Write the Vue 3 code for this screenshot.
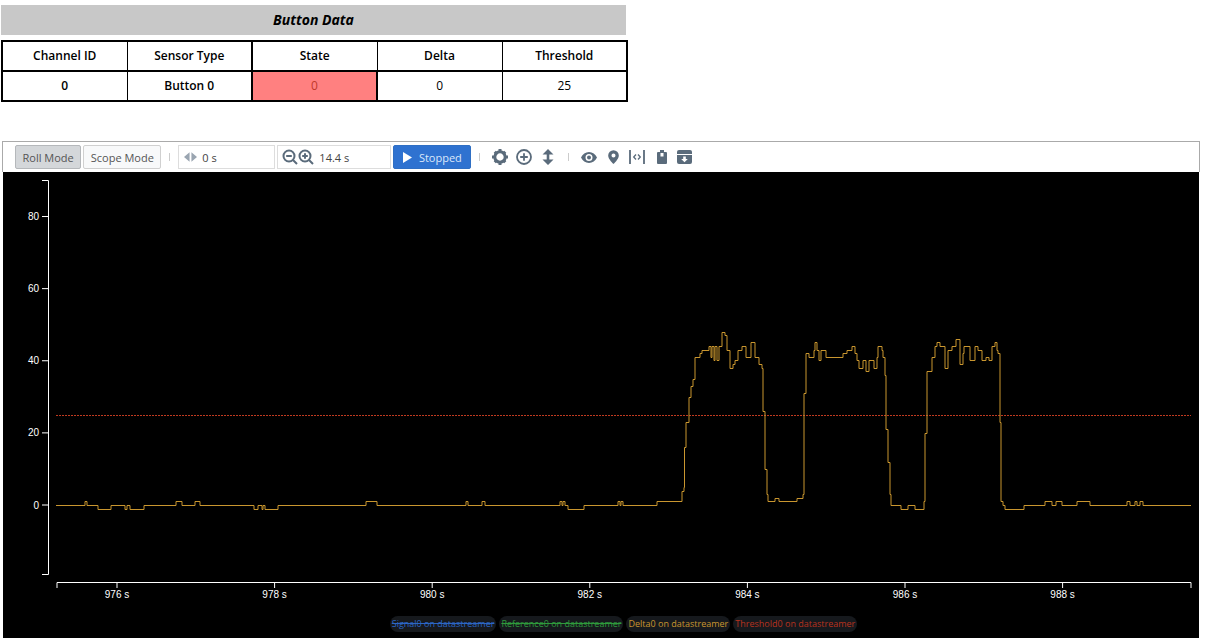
<template>
  <div class="page">
    <div class="title">Button Data</div>
    <table class="data-table">
      <tbody>
        <tr>
          <th v-for="h in headers" :key="h">{{ h }}</th>
        </tr>
        <tr>
          <td class="fw">0</td>
          <td class="fw">Button 0</td>
          <td class="state">0</td>
          <td>0</td>
          <td>25</td>
        </tr>
      </tbody>
    </table>

    <div class="toolbar">
      <button class="btn active">Roll Mode</button>
      <button class="btn">Scope Mode</button>
      <span class="sep"></span>
      <div class="field f-offset">
        <svg viewBox="0 0 14 10" width="13" height="10">
          <path d="M6 0v10L0 5zM8 0v10l6-5z" fill="#9aa5b1" />
        </svg>
        <span>0 s</span>
      </div>
      <div class="field f-span">
        <svg viewBox="0 0 16 16" width="16" height="16">
          <circle cx="7" cy="7" r="5.500" fill="none" stroke="#5a6b7b" stroke-width="2" />
          <path d="M4.200 7h5.600M11 11l4 4" stroke="#5a6b7b" stroke-width="2" fill="none" />
        </svg>
        <svg viewBox="0 0 16 16" width="16" height="16">
          <circle cx="7" cy="7" r="5.500" fill="none" stroke="#5a6b7b" stroke-width="2" />
          <path d="M4.200 7h5.600M7 4.200v5.600M11 11l4 4" stroke="#5a6b7b" stroke-width="2" fill="none" />
        </svg>
        <span>14.4 s</span>
      </div>
      <button class="btn-stop">
        <svg viewBox="0 0 10 12" width="9" height="11"><path d="M0 0l10 6-10 6z" fill="#fff" /></svg>
        Stopped
      </button>
      <span class="sep s2"></span>
      <div class="icons">
        <svg class="i-gear" viewBox="0 0 16 16" width="16" height="16">
          <path d="M8 8m-5.200 0a5.200 5.200 0 1 0 10.400 0a5.200 5.200 0 1 0-10.400 0" fill="none" stroke="#5a6b7b" stroke-width="3" />
          <path d="M6.500 0h3v3h-3zM6.500 13h3v3h-3zM0 6.500h3v3H0zM13 6.500h3v3h-3zM1.700 3.800l2.100-2.100 2.100 2.100-2.100 2.100zM10.100 12.200l2.100-2.100 2.100 2.100-2.100 2.100zM1.700 12.200l2.100-2.100 2.100 2.100-2.100 2.100zM10.100 3.800l2.100-2.100 2.100 2.100-2.100 2.100z" fill="#5a6b7b" />
        </svg>
        <svg class="i-plus" viewBox="0 0 16 16" width="16" height="16">
          <circle cx="8" cy="8" r="7" fill="none" stroke="#5a6b7b" stroke-width="1.800" />
          <path d="M4.200 8h7.600M8 4.200v7.600" stroke="#5a6b7b" stroke-width="1.800" />
        </svg>
        <svg class="i-arrows" viewBox="0 0 12 16" width="12" height="16">
          <path d="M6 0l5.500 5.500H7.300v5h4.200L6 16 .5 10.500h4.200v-5H.5z" fill="#5a6b7b" />
        </svg>
        <span class="sep s3"></span>
        <svg class="i-eye" viewBox="0 0 16 11" width="16" height="11">
          <path d="M8 0C4.500 0 1.600 2.300 0 5.500 1.600 8.700 4.500 11 8 11s6.400-2.300 8-5.500C14.400 2.300 11.500 0 8 0zm0 9a3.500 3.500 0 1 1 0-7 3.500 3.500 0 0 1 0 7z" fill="#5a6b7b" />
          <circle cx="8" cy="5.500" r="2" fill="#5a6b7b" />
        </svg>
        <svg class="i-pin" viewBox="0 0 12 15" width="11" height="14">
          <path d="M6 0a5.800 5.800 0 0 0-5.800 5.800C.2 10 6 15 6 15s5.800-5 5.800-9.200A5.800 5.800 0 0 0 6 0zm0 8a2.200 2.200 0 1 1 0-4.400A2.200 2.200 0 0 1 6 8z" fill="#5a6b7b" />
        </svg>
        <svg class="i-span" viewBox="0 0 16 14" width="16" height="14">
          <path d="M1 0v14M15 0v14" stroke="#5a6b7b" stroke-width="1.800" />
          <path d="M7 4.500L4.700 7 7 9.500M9 4.500L11.300 7 9 9.500" stroke="#5a6b7b" stroke-width="1.300" fill="none" />
        </svg>
        <svg class="i-lock" viewBox="0 0 10 14" width="10" height="14">
          <path d="M3 0h4v2h2a1 1 0 0 1 1 1v10a1 1 0 0 1-1 1H1a1 1 0 0 1-1-1V3a1 1 0 0 1 1-1h2z" fill="#5a6b7b" />
          <rect x="3.500" y="3" width="3" height="3.500" fill="#fff" />
        </svg>
        <svg class="i-box" viewBox="0 0 15 14" width="15" height="14">
          <path d="M2 0h11a2 2 0 0 1 2 2v2H0V2a2 2 0 0 1 2-2z" fill="#5a6b7b" />
          <path d="M0 5h15v7a2 2 0 0 1-2 2H2a2 2 0 0 1-2-2z" fill="#5a6b7b" />
          <path d="M6.200 6.500h2.600v2.500h2L7.500 12.200 4.200 9h2z" fill="#fff" />
        </svg>
      </div>
    </div>

    <div class="chart">
      <svg class="plot" width="1196" height="440" viewBox="3 172 1196 440">
        <g stroke="#fff" fill="none">
          <path d="M42 180.500h6.500v394H42" />
          <path d="M57 588v-5.500h1134v5.500" />
          <path v-for="t in yTicks" :key="t.label" :d="`M42 ${t.y}h6`" />
          <path v-for="t in xTicks" :key="t.label" :d="`M${t.x} 583v5`" />
        </g>
        <g class="tick-text">
          <text v-for="t in yTicks" :key="t.label" x="39" :y="t.y + 3.500" text-anchor="end">{{ t.label }}</text>
          <text v-for="t in xTicks" :key="t.label" :x="t.x" y="598" text-anchor="middle">{{ t.label }}</text>
        </g>
        <path d="M56 415.500H589M590 415.500H1191" stroke="#c03a20" stroke-dasharray="2 1" fill="none" />
        <path :d="deltaPath" stroke="#c9962f" fill="none" />
      </svg>
      <div class="legend">
        <span class="pill off blue">Signal0 on datastreamer</span>
        <span class="pill off green">Reference0 on datastreamer</span>
        <span class="pill orange">Delta0 on datastreamer</span>
        <span class="pill red">Threshold0 on datastreamer</span>
      </div>
    </div>
  </div>
</template>

<script setup>
import { computed } from 'vue'

const headers = ['Channel ID', 'Sensor Type', 'State', 'Delta', 'Threshold']

const yTicks = [80, 60, 40, 20, 0].map(v => ({ label: String(v), y: 505 - v * 3.606 }))
const xTicks = [976, 978, 980, 982, 984, 986, 988].map((s, i) => ({ label: s + ' s', x: 117 + i * 157.6 }))

// x pixel where the value starts, value
const samples = [
  [56, 0], [85, 1], [87, 0], [98, -1], [111, 0], [125, -1], [127, 0], [130, -1], [144, 0],
  [176, 1], [182, 0], [195, 1], [200, 0], [254, -1], [258, 0], [262, -1], [263, 0], [265, -1], [278, 0],
  [366, 1], [377, 0], [466, 1], [468, 0], [482, 1], [485, 0], [560, 1], [562, 0], [563, 1], [565, 0],
  [568, -1], [584, 0], [618, 1], [620, 0], [621, 1], [623, 0], [657, 1],
  [682, 4], [684, 5], [684.5, 16], [686, 23], [689, 30], [691, 33], [693, 35], [695, 41],
  [700, 42], [702, 43], [709, 44], [711, 41], [712, 44], [714, 40], [715, 44], [717, 40], [719, 44],
  [722, 48], [725, 47], [727, 43], [730, 38], [733, 39], [735, 40], [738, 43], [742, 44], [746, 41],
  [751, 45], [755, 41], [759, 39], [762, 38], [763, 26], [765, 10], [767, 3], [768, 1],
  [775, 2], [779, 1], [797, 2], [803, 3], [804, 31], [806, 42], [809, 41], [814, 43], [815, 45], [817, 43],
  [819, 40], [821, 43], [826, 41],
  [843, 42], [847, 43], [852, 44], [855, 42], [857, 40], [859, 38], [863, 40], [866, 37], [869, 40],
  [874, 38], [877, 41], [878, 44], [882, 43], [883, 41], [885, 36], [886, 21], [888, 12], [890, 3], [891, 0],
  [901, -1], [908, 0], [915, -1], [924, 1], [925, 20], [927, 37], [932, 41], [935, 44], [937, 45], [940, 44],
  [945, 38], [948, 43], [952, 44], [956, 46], [960, 39], [963, 42], [964, 44], [970, 40], [975, 44], [978, 43],
  [982, 40], [986, 41], [989, 40], [992, 44], [995, 45], [997, 43], [998, 42], [1000, 23], [1001, 1], [1003, 0], [1005, -1],
  [1024, 0], [1045, 1], [1052, 0], [1056, 1], [1062, 0], [1077, 1], [1090, 0],
  [1127, 1], [1130, 0], [1135, 1], [1137, 0], [1140, 1], [1143, 0], [1191, 0],
]

const deltaPath = computed(() => {
  let d = ''
  samples.forEach(([x, v], i) => {
    const y = (505.5 - Math.round(v * 3.6125)).toFixed(1)
    d += i === 0 ? `M${x} ${y}` : `H${x}V${y}`
  })
  return d
})
</script>

<style scoped>
.page { width: 1205px; height: 644px; overflow: hidden; background: #fff; font-family: "Open Sans", "Noto Sans", sans-serif; padding-top: 5px; box-sizing: border-box; }
.title { margin-left: 1px; width: 625px; height: 30px; background: #c8c8c8; text-align: center; line-height: 30px; font-size: 14px; font-weight: 700; font-style: italic; color: #000; }
.data-table { margin: 5px 0 0 1px; width: 627px; height: 62px; border-collapse: collapse; border: 2px solid #000; table-layout: fixed; font-size: 12px; color: #000; }
.data-table th, .data-table td { border: 1px solid #000; text-align: center; padding: 0; height: 28px; line-height: 16px; font-weight: 400; }
.data-table tr:first-child th { border-bottom: 2px solid #000; font-weight: 600; }
.data-table th:nth-child(3), .data-table td.state { border-left: 2px solid #000; }
.data-table .fw { font-weight: 600; }
.data-table .state { background: #ff8080; color: #c0392b; border-right: 2px solid #000; }

.toolbar { margin: 39px 0 0 2px; width: 1198px; height: 31px; border: 1px solid #aaa; border-bottom: none; box-sizing: border-box; display: flex; align-items: center; padding: 0 0 0 12px; font-size: 11px; color: #444; }
.btn { height: 24px; padding: 0 6.500px; margin-right: 2px; border: 1px solid #d0d0d0; border-radius: 2px; background: #f8f9fa; font: inherit; color: #555; }
.btn.active { background: #d4d7da; border-color: #b5b8bb; }
.sep { width: 1px; height: 8px; background: #ccc; margin: 0 8px 0 6px; }
.field { height: 24px; border: 1px solid #ddd; box-sizing: border-box; display: flex; align-items: center; background: #fff; margin-right: 2px; }
.f-offset { width: 97px; padding-left: 5px; gap: 5px; }
.f-span { width: 114px; padding-left: 4px; gap: 0; }
.f-span span { margin-left: 5px; }
.btn-stop { width: 78px; height: 24px; border: 1px solid #2f6fc4; border-radius: 2px; background: #2f72d0; color: #dbe8fa; font: inherit; display: flex; align-items: center; justify-content: center; gap: 7px; padding: 0; }
.s2 { margin: 0 12px 0 8px; }
.icons { display: flex; align-items: center; }
.i-plus { margin-left: 8px; }
.i-arrows { margin-left: 10px; }
.s3 { margin: 0 12px 0 14px; }
.i-pin { margin-left: 11px; }
.i-span { margin-left: 10px; }
.i-lock { margin-left: 12px; }
.i-box { margin-left: 10px; }

.chart { margin-left: 3px; width: 1196px; height: 466px; background: #000; display: flex; flex-direction: column; }
.plot { display: block; flex: none; }
.tick-text { font-family: "Liberation Sans", Arial, sans-serif; font-size: 10px; fill: #fff; }
.legend { display: flex; justify-content: center; gap: 3px; margin-top: 4px; font-size: 9px; padding-left: 45px; }
.pill { height: 16px; line-height: 16px; padding: 0 2px; border-radius: 8px; background: #16191d; }
.off { text-decoration: line-through; }
.blue { color: #2c66c4; }
.green { color: #2f9a3c; }
.orange { color: #c9962f; }
.red { color: #b8321e; }
</style>
